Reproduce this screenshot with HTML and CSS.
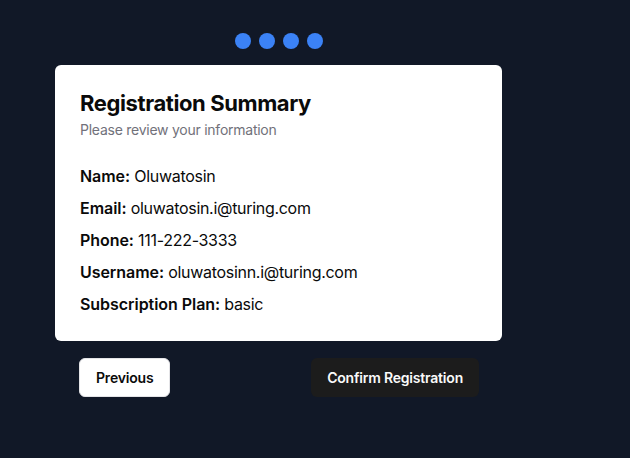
FILE: index.html
```html
<!DOCTYPE html>
<html lang="en">
<head>
<meta charset="utf-8">
<title>Registration Summary</title>
<link rel="stylesheet" href="styles.css">
</head>
<body>
<div class="page">
  <div class="wizard">
    <div class="steps">
      <span class="dot"></span><span class="dot"></span><span class="dot"></span><span class="dot"></span>
    </div>
    <div class="card">
      <h1 class="title">Registration Summary</h1>
      <p class="subtitle">Please review your information</p>
      <div class="fields">
        <p class="field"><strong>Name:</strong> Oluwatosin</p>
        <p class="field"><strong>Email:</strong> oluwatosin.i@turing.com</p>
        <p class="field"><strong>Phone:</strong> 111-222-3333</p>
        <p class="field"><strong>Username:</strong> oluwatosinn.i@turing.com</p>
        <p class="field"><strong>Subscription Plan:</strong> basic</p>
      </div>
    </div>
    <div class="actions">
      <button class="btn btn-light">Previous</button>
      <button class="btn btn-dark">Confirm Registration</button>
    </div>
  </div>
</div>
</body>
</html>
```
FILE: styles.css
```css
* { box-sizing: border-box; }
html, body { margin: 0; padding: 0; }
body {
  background: #111827;
  font-family: Inter, "Noto Sans", sans-serif;
  color: #111;
  height: 458px;
}
.page {
  padding: 33px 0 0 55px;
}
.wizard {
  width: 447px;
}
.steps {
  display: flex;
  justify-content: center;
  gap: 8px;
  margin-bottom: 16px;
}
.dot {
  width: 16px;
  height: 16px;
  border-radius: 50%;
  background: #3b82f6;
}
.card {
  background: #fff;
  border-radius: 6px;
  padding: 24px 25px 25px;
}
.title {
  margin: 0;
  font-size: 22px;
  font-weight: 700;
  line-height: 28px;
  letter-spacing: -0.4px;
  color: #0a0a0a;
}
.subtitle {
  margin: 3px 0 0;
  font-size: 14px;
  line-height: 20px;
  letter-spacing: -0.25px;
  color: #71717a;
}
.fields {
  margin-top: 24px;
  display: flex;
  flex-direction: column;
  gap: 8px;
}
.field {
  margin: 0;
  font-size: 16px;
  line-height: 24px;
  letter-spacing: -0.3px;
  color: #0a0a0a;
}
.field strong {
  font-weight: 600;
  letter-spacing: -0.05px;
}
.actions {
  display: flex;
  justify-content: space-between;
  padding: 0 23px 0 24px;
  margin-top: 17px;
}
.btn {
  font-family: inherit;
  font-size: 14px;
  font-weight: 600;
  line-height: 20px;
  height: 39px;
  border-radius: 6px;
  padding: 0 15px;
  letter-spacing: -0.2px;
  border: 1px solid transparent;
  cursor: pointer;
}
.btn-light {
  padding: 0 16px;
  background: #fff;
  color: #0a0a0a;
  border-color: #e4e4e7;
}
.btn-dark {
  background: #1c1c1c;
  color: #fafafa;
}
```
